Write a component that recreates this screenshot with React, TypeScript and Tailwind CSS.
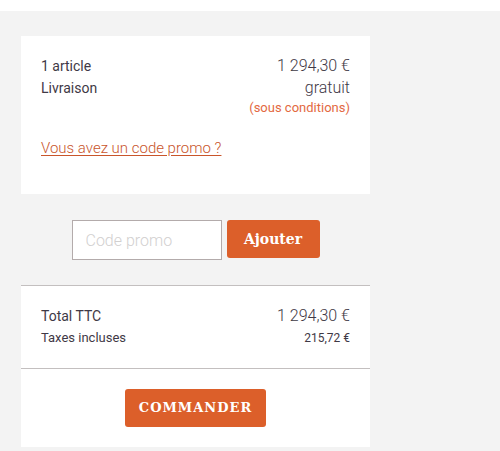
const ink = "text-[#3f3946]";

function Row({
  label,
  value,
  big = false,
}: {
  label: string;
  value: string;
  big?: boolean;
}) {
  return (
    <div className={`flex items-baseline justify-between ${big ? "" : "mt-px"}`}>
      <span className={big ? "text-[14px] leading-[22px]" : "text-[13px] leading-[20px]"}>
        {label}
      </span>
      <span
        className={
          big
            ? "text-[16px] font-light leading-[22px]"
            : "text-[12px] leading-[20px]"
        }
      >
        {value}
      </span>
    </div>
  );
}

export default function App() {
  return (
    <div
      className={`min-h-[451px] w-[500px] bg-white ${ink}`}
      style={{ fontFamily: "Roboto, 'Liberation Sans', sans-serif" }}
    >
      <div className="mt-[11px] min-h-[440px] bg-[#f3f3f3] pt-[25px] pl-[21px]">
        <div className="w-[349px]">
          <section className="bg-white px-5 pt-[19px] pb-[35px]">
            <div className="flex items-baseline justify-between">
              <span className="text-[14px] leading-[21px]">1 article</span>
              <span className="text-[16px] font-light leading-[21px]">1 294,30 €</span>
            </div>
            <div className="flex items-baseline justify-between">
              <span className="text-[14px] leading-[21px]">Livraison</span>
              <span className="text-[16px] font-light leading-[21px]">gratuit</span>
            </div>
            <div className="text-right text-[13px] leading-[18px] text-[#e3693f]">
              (sous conditions)
            </div>
            <a
              href="#"
              className="mt-[21px] block text-[15px] font-light leading-[21px] text-[#c9552b] underline underline-offset-2"
            >
              Vous avez un code promo ?
            </a>
          </section>

          <div className="flex items-start justify-center gap-[5px] pt-[26px] pb-[25px]">
            <input
              placeholder="Code promo"
              className="h-10 w-[150px] border border-[#b3abab] bg-white px-[13px] text-[16px] font-light outline-none placeholder:text-[#d2d0d0]"
            />
            <button
              className="h-[38px] w-[93px] rounded-[3px] bg-[#dc5f2a] text-[14px] font-bold text-white"
              style={{ fontFamily: "'DejaVu Serif', serif" }}
            >
              Ajouter
            </button>
          </div>

          <section className="border-t border-[#c3bfbf] bg-white">
            <div className="px-5 pt-[19px] pb-5">
              <Row label="Total TTC" value="1 294,30 €" big />
              <Row label="Taxes incluses" value="215,72 €" />
            </div>
            <div className="flex justify-center border-t border-[#c3bfbf] py-5">
              <button
                className="h-[38px] w-[141px] rounded-[3px] bg-[#dc5f2a] text-[13px] font-bold tracking-[1px] text-white"
                style={{ fontFamily: "'DejaVu Serif', serif" }}
              >
                COMMANDER
              </button>
            </div>
          </section>
        </div>
      </div>
    </div>
  );
}
